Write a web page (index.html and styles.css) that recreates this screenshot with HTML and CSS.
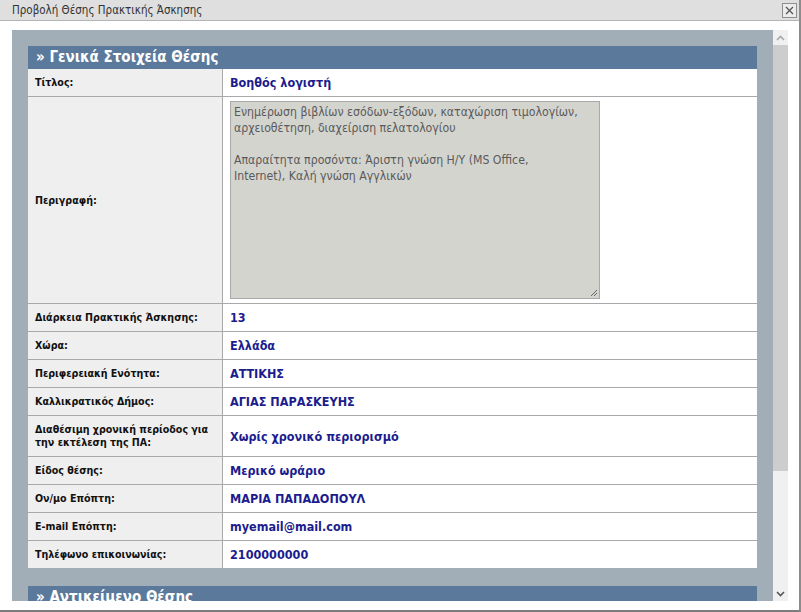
FILE: index.html
```html
<!DOCTYPE html>
<html lang="el">
<head>
<meta charset="utf-8">
<title>Προβολή Θέσης Πρακτικής Άσκησης</title>
<link rel="stylesheet" href="styles.css">
</head>
<body>
<div class="window">
  <div class="titlebar">
    <span class="title">Προβολή Θέσης Πρακτικής Άσκησης</span>
    <span class="close" aria-label="Κλείσιμο">
      <svg width="9" height="9" viewBox="0 0 9 9"><path d="M1 1 L8 8 M8 1 L1 8" stroke="#555" stroke-width="1.3" fill="none"/></svg>
    </span>
  </div>
  <div class="content">
    <div class="viewport">
      <div class="panel">
        <section class="section">
          <h2 class="section-head">» Γενικά Στοιχεία Θέσης</h2>
          <table class="details">
            <tr><th>Τίτλος:</th><td>Βοηθός λογιστή</td></tr>
            <tr class="desc-row"><th>Περιγραφή:</th><td><div class="textarea">Ενημέρωση βιβλίων εσόδων-εξόδων, καταχώριση τιμολογίων,<br>αρχειοθέτηση, διαχείριση πελατολογίου<br><br>Απαραίτητα προσόντα: Άριστη γνώση Η/Υ (MS Office,<br>Internet), Καλή γνώση Αγγλικών<svg class="grip" width="8" height="8" viewBox="0 0 8 8"><path d="M7 1 L1 7 M7 4 L4 7" stroke="#666" stroke-width="1" fill="none"/></svg></div></td></tr>
            <tr><th>Διάρκεια Πρακτικής Άσκησης:</th><td>13</td></tr>
            <tr><th>Χώρα:</th><td>Ελλάδα</td></tr>
            <tr><th>Περιφερειακή Ενότητα:</th><td>ΑΤΤΙΚΗΣ</td></tr>
            <tr><th>Καλλικρατικός Δήμος:</th><td>ΑΓΙΑΣ ΠΑΡΑΣΚΕΥΗΣ</td></tr>
            <tr class="tall-row"><th>Διαθέσιμη χρονική περίοδος για την εκτέλεση της ΠΑ:</th><td>Χωρίς χρονικό περιορισμό</td></tr>
            <tr><th>Είδος θέσης:</th><td>Μερικό ωράριο</td></tr>
            <tr><th>Ον/μο Επόπτη:</th><td>ΜΑΡΙΑ ΠΑΠΑΔΟΠΟΥΛ</td></tr>
            <tr><th>E-mail Επόπτη:</th><td>myemail@mail.com</td></tr>
            <tr><th>Τηλέφωνο επικοινωνίας:</th><td>2100000000</td></tr>
          </table>
        </section>
        <section class="section">
          <h2 class="section-head">» Αντικείμενο Θέσης</h2>
        </section>
      </div>
    </div>
    <div class="scrollbar">
      <div class="sb-btn">
        <svg width="9" height="6" viewBox="0 0 9 6"><path d="M1 5 L4.5 1.5 L8 5" stroke="#a8a8a8" stroke-width="1.6" fill="none"/></svg>
      </div>
      <div class="sb-thumb"></div>
      <div class="sb-track"></div>
      <div class="sb-btn">
        <svg width="9" height="6" viewBox="0 0 9 6"><path d="M1 1 L4.5 4.5 L8 1" stroke="#555" stroke-width="1.6" fill="none"/></svg>
      </div>
    </div>
  </div>
</div>
</body>
</html>
```

FILE: styles.css
```css
html, body {
  margin: 0;
  padding: 0;
  background: #ffffff;
}

body {
  font-family: "DejaVu Sans Condensed", "DejaVu Sans", Verdana, sans-serif;
  font-stretch: condensed;
}

.window {
  width: 799px;
  height: 610px;
  border-right: 2px solid #8c8c8c;
  border-bottom: 2px solid #7c7c7c;
  background: #ffffff;
  display: flex;
  flex-direction: column;
}

.titlebar {
  height: 20px;
  border-bottom: 1px solid #b4b4b4;
  background: #dfdfdf;
  display: flex;
  align-items: center;
  justify-content: space-between;
  padding: 0 2px 0 12px;
}

.title {
  font-size: 11.5px;
  color: #333;
}

.close {
  width: 13px;
  height: 13px;
  border: 1px solid #8e8e8e;
  background: #ececec;
  display: flex;
  align-items: center;
  justify-content: center;
}

.content {
  display: flex;
  padding: 9px 11px 0 12px;
  height: 571px;
}

.viewport {
  width: 761px;
  height: 571px;
  overflow: hidden;
}

.panel {
  background: #a1adb7;
  padding: 16px 16px 0;
}

.section {
  margin-bottom: 18px;
}

.section-head {
  margin: 0;
  height: 23px;
  line-height: 22px;
  background: #5b7a9b;
  color: #ffffff;
  font-size: 15px;
  font-weight: bold;
  padding-left: 8px;
}

.details {
  width: 100%;
  border-collapse: collapse;
  background: #ffffff;
}

.details th,
.details td {
  height: 27px;
  padding: 0 7px;
  border-bottom: 1px solid #a9a9a9;
  vertical-align: middle;
  text-align: left;
}

.details tr:last-child th,
.details tr:last-child td {
  border-bottom: none;
}

.details th {
  width: 180px;
  background: #efefef;
  border-right: 1px solid #a9a9a9;
  font-size: 10.6px;
  font-weight: bold;
  color: #111;
  line-height: 13px;
}

.details td {
  font-size: 12.5px;
  font-weight: bold;
  color: #1c1c8e;
}

.tall-row th,
.tall-row td {
  height: 40px;
}

.desc-row th {
  height: 206px;
}

.desc-row td {
  height: 198px;
  padding-top: 4px;
  padding-bottom: 4px;
  vertical-align: top;
}

.textarea {
  position: relative;
  box-sizing: border-box;
  width: 370px;
  height: 198px;
  border: 1px solid #a8a8a8;
  background: #d4d4cf;
  padding: 2px 3px;
  font-size: 12.2px;
  font-weight: normal;
  line-height: 16px;
  color: #5a5a5a;
}

.grip {
  position: absolute;
  right: 1px;
  bottom: 1px;
}

.scrollbar {
  width: 15px;
  display: flex;
  flex-direction: column;
  background: #f0f0f0;
}

.sb-btn {
  height: 15px;
  display: flex;
  align-items: center;
  justify-content: center;
}

.sb-thumb {
  height: 426px;
  background: #cdcdcd;
}

.sb-track {
  flex: 1;
}
```
